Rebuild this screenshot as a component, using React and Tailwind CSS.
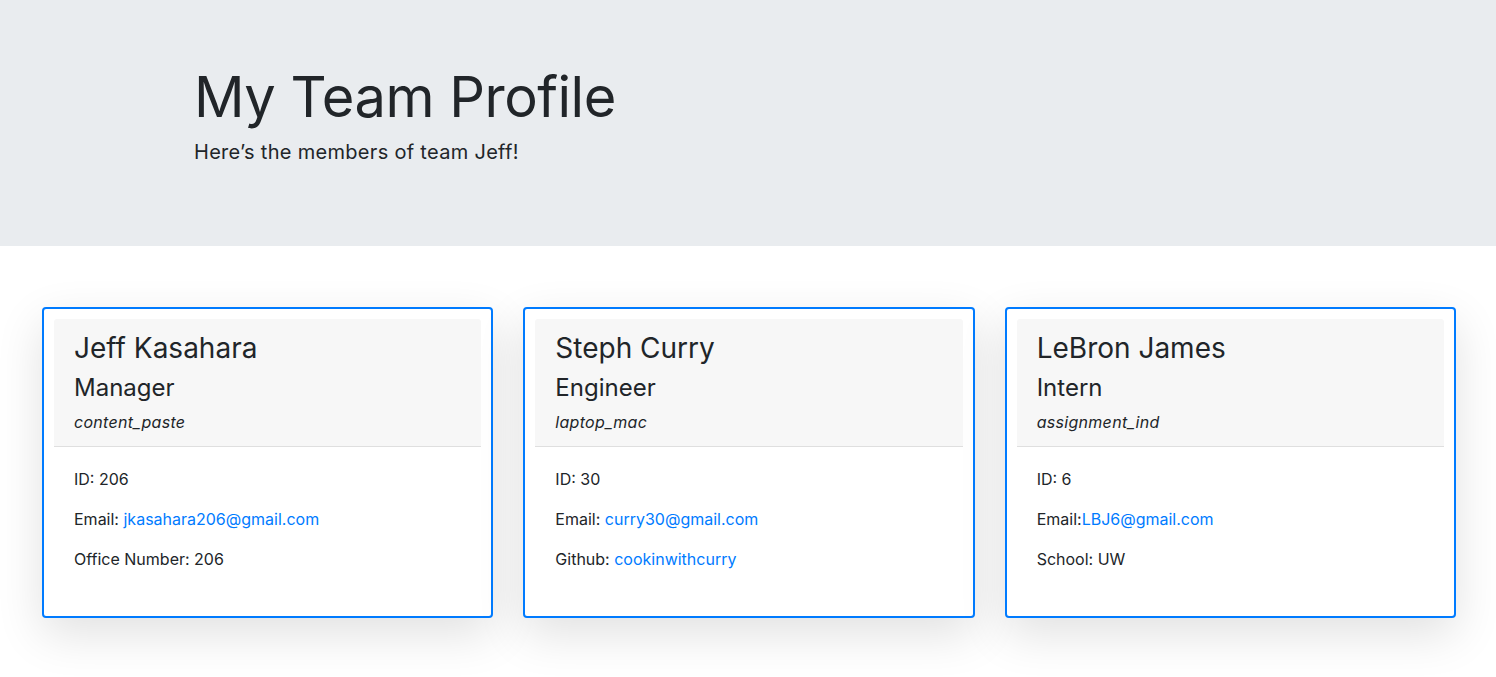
import React from 'react';

const team = [
  {
    name: 'Jeff Kasahara',
    role: 'Manager',
    icon: 'content_paste',
    id: 206,
    emailLabel: 'Email: ',
    email: 'jkasahara206@gmail.com',
    extraLabel: 'Office Number: ',
    extra: '206',
  },
  {
    name: 'Steph Curry',
    role: 'Engineer',
    icon: 'laptop_mac',
    id: 30,
    emailLabel: 'Email: ',
    email: 'curry30@gmail.com',
    extraLabel: 'Github: ',
    extra: 'cookinwithcurry',
    extraLink: true,
  },
  {
    name: 'LeBron James',
    role: 'Intern',
    icon: 'assignment_ind',
    id: 6,
    emailLabel: 'Email:',
    email: 'LBJ6@gmail.com',
    extraLabel: 'School: ',
    extra: 'UW',
  },
];

const MemberCard = ({ member }) => {
  return (
    <div className="border-2 border-[#007bff] rounded bg-white p-[10px] shadow-[0_1rem_3rem_rgba(0,0,0,0.12)]">
      {/* Header */}
      <div className="bg-[#f7f7f7] border-b border-[#dfdfdf] rounded-t-[3px] px-5 pt-[13px] pb-3">
        <h3 className="text-[28px] leading-[1.2] mb-2">{member.name}</h3>
        <h4 className="text-[24px] leading-[1.2] mb-2">{member.role}</h4>
        <p className="italic text-[16px] leading-6 tracking-[0.3px]">{member.icon}</p>
      </div>

      {/* Body */}
      <div className="px-5 pt-5 pb-[19px] text-[16px] leading-6">
        <p className="mb-4">ID: {member.id}</p>
        <p className="mb-4">
          {member.emailLabel}
          <a href="#" className="text-[#007bff]">{member.email}</a>
        </p>
        <p className="mb-4">
          {member.extraLabel}
          {member.extraLink ? (
            <a href="#" className="text-[#007bff]">{member.extra}</a>
          ) : (
            member.extra
          )}
        </p>
      </div>
    </div>
  );
};

const App = () => {
  return (
    <div className="min-h-screen bg-white text-[#212529] font-['Inter','Noto_Sans',sans-serif]">
      {/* Jumbotron */}
      <div className="bg-[#e9ecef] h-[246px] pt-16">
        <div className="max-w-[1140px] mx-auto pl-4 pr-[15px]">
          <h1 className="text-[56px] leading-[1.2] font-normal tracking-[-0.5px] mb-1.5">My Team Profile</h1>
          <p className="text-[20px] leading-normal tracking-[0.3px]">Here’s the members of team Jeff!</p>
        </div>
      </div>

      {/* Team cards */}
      <div className="grid grid-cols-3 gap-[30px] pl-[42px] pr-[40px] pt-[61px] pb-12">
        {team.map((m) => (
          <MemberCard key={m.name} member={m} />
        ))}
      </div>
    </div>
  );
};

export default App;
